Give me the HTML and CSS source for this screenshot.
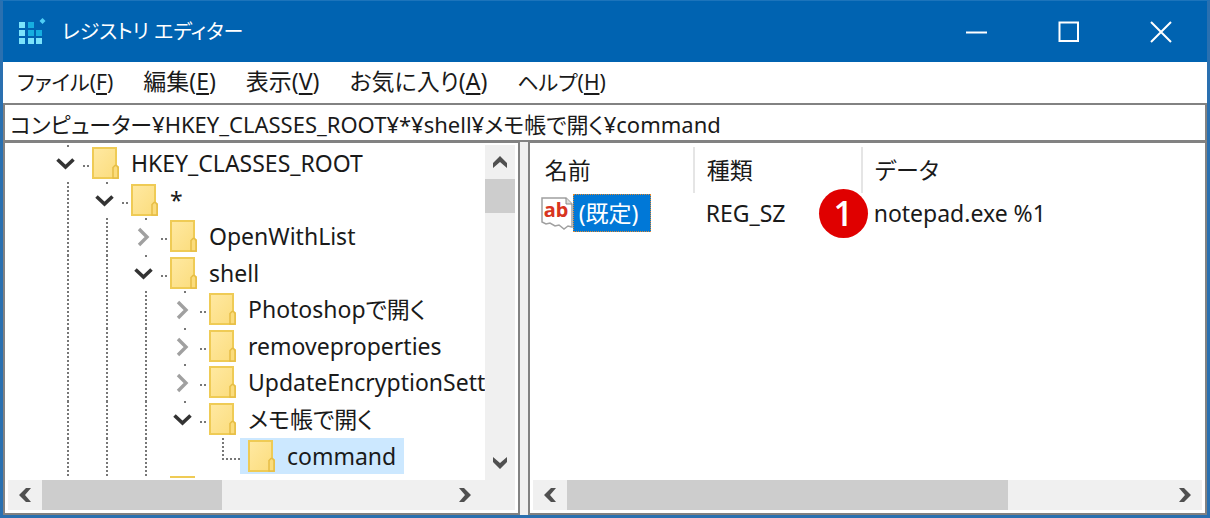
FILE: index.html
```html
<!DOCTYPE html>
<html lang="ja">
<head>
  <meta charset="UTF-8">
  <meta name="viewport" content="width=device-width, initial-scale=1.0">
  <title>レジストリ エディター</title>
  <link rel="stylesheet" href="styles.css">
</head>
<body>
  <!-- shared icons -->
  <svg class="defs" width="0" height="0" aria-hidden="true">
    <defs>
      <linearGradient id="paper" x1="0" y1="0" x2="1" y2="1">
        <stop offset="0" stop-color="#ffe9a2"/>
        <stop offset="1" stop-color="#fbdc7c"/>
      </linearGradient>
    </defs>
    <symbol id="folder" viewBox="0 0 27 32">
      <path d="M1 1h23v18l2 1v11H1z" fill="url(#paper)" stroke="#efcb55" stroke-width="2"/>
      <path d="M21 31V20.500l2-2h1.500l1.500 2V31z" fill="#fbdc7c" stroke="#e6bd45" stroke-width="1.500"/>
    </symbol>
    <symbol id="open" viewBox="0 0 39 36">
      <path d="M4.500 14.500l8 7.500 8-7.500" fill="none" stroke="#333" stroke-width="3.600"/>
      <path d="M14 0h2v2h-2zM30 20h2v2h-2zM34 20h2v2h-2z" fill="#777"/>
    </symbol>
    <symbol id="closed" viewBox="0 0 39 36">
      <path d="M8 11l8 8-8 8" fill="none" stroke="#a0a0a0" stroke-width="3.400"/>
      <path d="M14 0h2v2h-2zM30 20h2v2h-2zM34 20h2v2h-2z" fill="#777"/>
    </symbol>
    <symbol id="arrow" viewBox="0 0 16 16">
      <path d="M14 1H9L2 8l7 7h5L8 8z" fill="#505050"/>
    </symbol>
  </svg>

  <div class="window">
    <header class="titlebar">
      <svg class="logo" viewBox="0 0 28 28" aria-hidden="true">
        <path d="M1 4h6v6H1zM1 12h6v6H1zM1 20h6v6H1zM10 20h6v6h-6zM18 20h6v6h-6z" fill="#7be3fb"/>
        <path d="M10 4h6v6h-6zM10 12h6v6h-6zM18 12h6v6h-6z" fill="#16aee0"/>
        <path d="M24.500 0l3 3-3 3-3-3z" fill="#4fcdf5"/>
      </svg>
      <h1>レジストリ エディター</h1>
      <div class="controls">
        <button type="button" aria-label="最小化"><svg viewBox="0 0 22 22"><path d="M0 11.500h21" /></svg></button>
        <button type="button" aria-label="最大化"><svg viewBox="0 0 22 22"><path d="M1.500 1.500h18.500v18.500H1.500z" /></svg></button>
        <button type="button" aria-label="閉じる"><svg viewBox="0 0 22 22"><path d="M1 1l20 20M21 1L1 21" /></svg></button>
      </div>
    </header>

    <nav class="menu">
      <button type="button" class="kana">ファイル(<u>F</u>)</button>
      <button type="button">編集(<u>E</u>)</button>
      <button type="button">表示(<u>V</u>)</button>
      <button type="button">お気に入り(<u>A</u>)</button>
      <button type="button" class="kana">ヘルプ(<u>H</u>)</button>
    </nav>

    <input class="address" type="text" aria-label="アドレス" value="コンピューター¥HKEY_CLASSES_ROOT¥*¥shell¥メモ帳で開く¥command">

    <main class="panes">
      <section class="pane">
        <div class="view">
          <ul class="tree">
            <li>
              <button type="button" class="toggle" aria-label="閉じる"><svg><use href="#open"/></svg></button>
              <button type="button" class="key"><svg><use href="#folder"/></svg>HKEY_CLASSES_ROOT</button>
            </li>
            <li>
              <i class="line"></i>
              <button type="button" class="toggle" aria-label="閉じる"><svg><use href="#open"/></svg></button>
              <button type="button" class="key"><svg><use href="#folder"/></svg>*</button>
            </li>
            <li>
              <i class="line"></i><i class="line"></i>
              <button type="button" class="toggle" aria-label="開く"><svg><use href="#closed"/></svg></button>
              <button type="button" class="key"><svg><use href="#folder"/></svg>OpenWithList</button>
            </li>
            <li>
              <i class="line"></i><i class="line"></i>
              <button type="button" class="toggle" aria-label="閉じる"><svg><use href="#open"/></svg></button>
              <button type="button" class="key"><svg><use href="#folder"/></svg>shell</button>
            </li>
            <li>
              <i class="line"></i><i class="line"></i><i class="line"></i>
              <button type="button" class="toggle" aria-label="開く"><svg><use href="#closed"/></svg></button>
              <button type="button" class="key"><svg><use href="#folder"/></svg>Photoshopで開く</button>
            </li>
            <li>
              <i class="line"></i><i class="line"></i><i class="line"></i>
              <button type="button" class="toggle" aria-label="開く"><svg><use href="#closed"/></svg></button>
              <button type="button" class="key"><svg><use href="#folder"/></svg>removeproperties</button>
            </li>
            <li>
              <i class="line"></i><i class="line"></i><i class="line"></i>
              <button type="button" class="toggle" aria-label="開く"><svg><use href="#closed"/></svg></button>
              <button type="button" class="key"><svg><use href="#folder"/></svg>UpdateEncryptionSettings</button>
            </li>
            <li>
              <i class="line"></i><i class="line"></i><i class="line"></i>
              <button type="button" class="toggle" aria-label="閉じる"><svg><use href="#open"/></svg></button>
              <button type="button" class="key"><svg><use href="#folder"/></svg>メモ帳で開く</button>
            </li>
            <li>
              <i class="line"></i><i class="line"></i><i class="line"></i><i class="space"></i><i class="branch"></i>
              <button type="button" class="key selected"><svg><use href="#folder"/></svg>command</button>
            </li>
            <li class="peek">
              <i class="line"></i><i class="line"></i><i class="line"></i>
              <svg><use href="#folder"/></svg>
            </li>
          </ul>
          <div class="scroll vertical">
            <button type="button" aria-label="上へ"><svg><use href="#arrow"/></svg></button>
            <span class="thumb"></span>
            <button type="button" class="end" aria-label="下へ"><svg><use href="#arrow"/></svg></button>
          </div>
        </div>
        <div class="scroll horizontal corner">
          <button type="button" aria-label="左へ"><svg><use href="#arrow"/></svg></button>
          <span class="thumb"></span>
          <button type="button" class="end" aria-label="右へ"><svg><use href="#arrow"/></svg></button>
        </div>
      </section>

      <section class="pane">
        <div class="view">
          <table class="values">
            <thead>
              <tr><th class="name">名前</th><th class="type">種類</th><th>データ</th></tr>
            </thead>
            <tbody>
              <tr>
                <td>
                  <div class="entry">
                    <svg class="ab" viewBox="0 0 32 34" aria-hidden="true">
                      <path d="M1 2h24l6 6v23l-4-1-4 3-5-4-4 1-5-3-4 1-4-2z" fill="#fff" stroke="#a0a0a0" stroke-width="1.500"/>
                      <path d="M25 2v6h6" fill="#ddd" stroke="#888"/>
                      <text x="15" y="21" text-anchor="middle">ab</text>
                    </svg>
                    <button type="button">(既定)</button>
                  </div>
                </td>
                <td>REG_SZ</td>
                <td class="data"><span class="badge">1</span>notepad.exe %1</td>
              </tr>
            </tbody>
          </table>
        </div>
        <div class="scroll horizontal">
          <button type="button" aria-label="左へ"><svg><use href="#arrow"/></svg></button>
          <span class="thumb wide"></span>
          <button type="button" class="end" aria-label="右へ"><svg><use href="#arrow"/></svg></button>
        </div>
      </section>
    </main>
  </div>
</body>
</html>
```
FILE: styles.css
```css
* {
  box-sizing: border-box;
}
body {
  margin: 0;
  font-family: "Noto Sans", "Noto Sans CJK JP", sans-serif;
  font-size: 23px;
  line-height: 36px;
  font-feature-settings: "palt";
  color: #1a1a1a;
}
button, input {
  font: inherit;
  font-feature-settings: inherit;
  color: inherit;
  border: none;
  background: none;
  padding: 0;
  margin: 0;
}
.defs {
  position: absolute;
}
.window {
  display: flex;
  flex-direction: column;
  min-height: 100vh;
  background: #0063b1;
  border: 3px solid #2a70b0;
  border-top: 1px solid #1c74bb;
}

/* title bar */
.titlebar {
  display: flex;
  align-items: center;
  height: 61px;
  padding-left: 15px;
  color: #fff;
}
.logo {
  width: 28px;
  height: 28px;
}
.titlebar h1 {
  flex: 1;
  margin: 0 0 0 16px;
  font-size: 20px;
  font-weight: 400;
}
.controls {
  display: flex;
}
.controls button {
  display: flex;
  align-items: center;
  justify-content: center;
  width: 92px;
  height: 60px;
}
.controls svg {
  width: 22px;
  height: 22px;
  fill: none;
  stroke: #fff;
  stroke-width: 2;
}

/* menu and address */
.menu {
  display: flex;
  align-items: baseline;
  gap: 30px;
  height: 41px;
  padding: 1px 14px 0;
  background: #fff;
}
.menu .kana {
  font-size: 21px;
}
.menu u {
  text-underline-offset: 3px;
  text-decoration-thickness: 2px;
}
.address {
  width: 100%;
  height: 39px;
  padding: 0 5px;
  font-size: 22px;
  background: #fff;
  border: 2px solid #828282;
}

/* panes */
.panes {
  flex: 1;
  display: grid;
  grid-template-columns: 432fr 568fr;
  gap: 8px;
  background: #f0f0f0;
}
.pane {
  display: flex;
  flex-direction: column;
  min-width: 0;
  padding: 2px 3px 3px;
  background: #fff;
  border: 2px solid #828282;
  border-top-width: 1px;
}
.view {
  flex: 1;
  display: flex;
  min-height: 0;
}
.tree {
  flex: 1;
  display: flex;
  flex-direction: column;
  min-width: 0;
  margin: 0;
  padding: 0 0 2px 45px;
  list-style: none;
  overflow: hidden;
}
.tree li {
  flex: 1 0 36px;
  display: flex;
  white-space: nowrap;
}
.line, .space, .branch {
  flex: none;
  width: 39px;
}
.line {
  background: repeating-linear-gradient(#777 0 2px, transparent 2px 4px) 14px 0 / 2px 100% no-repeat;
}
.branch {
  width: 31px;
  background:
    repeating-linear-gradient(#777 0 2px, transparent 2px 4px) 13px 0 / 2px 20px no-repeat,
    repeating-linear-gradient(90deg, #777 0 2px, transparent 2px 4px) 13px 20px / 18px 2px no-repeat;
}
.toggle {
  flex: none;
  width: 39px;
  height: 36px;
}
.toggle svg {
  display: block;
  width: 39px;
  height: 36px;
}
.key {
  display: flex;
  align-items: center;
  gap: 12px;
  height: 36px;
}
.key svg, .peek svg {
  flex: none;
  width: 27px;
  height: 32px;
}
.key.selected {
  padding: 0 8px;
  background: #cce8ff;
}
.tree .peek {
  flex: none;
  height: 4px;
  overflow: hidden;
}
.peek svg {
  margin-top: 2px;
}

/* scroll bars */
.scroll {
  display: flex;
  background: #f0f0f0;
}
.scroll button {
  display: flex;
  align-items: center;
  justify-content: center;
  width: 34px;
  height: 30px;
}
.scroll svg {
  width: 16px;
  height: 16px;
}
.scroll .end {
  margin-left: auto;
}
.horizontal {
  height: 30px;
}
.horizontal .end svg {
  transform: rotate(180deg);
}
.horizontal.corner {
  padding-right: 33px;
}
.horizontal .thumb {
  width: 38%;
}
.horizontal .thumb.wide {
  width: 66%;
}
.vertical {
  flex-direction: column;
  width: 30px;
}
.vertical button {
  width: 30px;
  height: 34px;
}
.vertical svg {
  transform: rotate(90deg);
}
.vertical .end {
  margin: auto 0 0;
}
.vertical .end svg {
  transform: rotate(270deg);
}
.thumb {
  background: #cdcdcd;
}
.vertical .thumb {
  height: 34px;
}

/* values */
.values {
  width: 100%;
  height: 86px;
  margin-top: 2px;
  table-layout: fixed;
  border-collapse: collapse;
}
.values th {
  height: 46px;
  padding: 0 12px;
  font-weight: 400;
  text-align: left;
  border-right: 2px solid #e5e5e5;
}
.values th:last-child {
  border-right: none;
}
.values td {
  height: 40px;
  padding: 0 12px;
}
.name {
  width: 161px;
}
.type {
  width: 168px;
}
.values td:first-child {
  padding: 0 0 0 8px;
}
.entry {
  display: flex;
  align-items: center;
}
.ab {
  width: 32px;
  height: 34px;
}
.ab text {
  font: bold 20px "Noto Sans", sans-serif;
  fill: #d8351f;
}
.entry button {
  height: 38px;
  padding: 0 12px 0 5px;
  color: #fff;
  background: #0078d7;
  border: 1px dotted #e08a30;
}
.values .data {
  position: relative;
}
.badge {
  position: absolute;
  top: -4px;
  left: -43px;
  width: 49px;
  height: 49px;
  border-radius: 50%;
  background: #e00000;
  color: #fff;
  font: 600 34px/49px "Open Sans", sans-serif;
  text-align: center;
}
```
